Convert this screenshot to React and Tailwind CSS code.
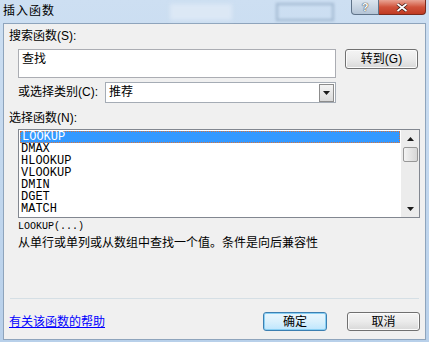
import React from 'react';

const cjk = "font-['Liberation_Sans','Noto_Sans_CJK_SC',sans-serif]";
const mono = "font-['Liberation_Mono',monospace]";

const funcs = ['LOOKUP', 'DMAX', 'HLOOKUP', 'VLOOKUP', 'DMIN', 'DGET', 'MATCH'];

const Arrow = ({ up }) => (
    <svg width="7" height="4" viewBox="0 0 7 4">
        <path d={up ? 'M0 4 L3.5 0 L7 4 Z' : 'M0 0 L7 0 L3.5 4 Z'} fill="#1a1a1a" />
    </svg>
);

const App = () => {
    return (
        <div className={`w-[429px] h-[342px] flex flex-col bg-gradient-to-b from-[#cddff2] to-[#b8d0ea] text-[12px] text-black ${cjk}`}>
            {/* title bar */}
            <div className="h-[23px] flex items-start relative">
                <div className="absolute left-[170px] top-[4px] w-[62px] h-[16px] bg-[#dce8f5] blur-[2px]" />
                <div className="absolute left-[276px] top-[3px] w-[58px] h-[18px] border-2 border-[#9fb6cf] blur-[1.5px]" />
                <div className="relative pl-[3px] pt-[4px] text-[12px] leading-[14px] tracking-[1px]">插入函数</div>
                <div className="flex-1" />
                <div className="relative mr-[3px] flex">
                    <div className="w-[28px] h-[15px] rounded-bl-[4px] border border-t-0 border-[#5f7389] bg-gradient-to-b from-[#dbe5ef] to-[#b4c4d6] flex items-center justify-center text-[11px] font-bold text-white leading-none [text-shadow:0_0_1px_#333,0_0_1px_#333]">?</div>
                    <div className="w-[47px] h-[15px] rounded-br-[4px] border border-l-0 border-t-0 border-[#7a2a1c] bg-gradient-to-b from-[#e8a495] via-[#d0533c] to-[#c03a22] flex items-center justify-center">
                        <svg width="12" height="9" viewBox="0 0 12 9">
                            <path d="M1.5 1 L10.5 8 M10.5 1 L1.5 8" stroke="#3b1a14" strokeWidth="3.2" />
                            <path d="M1.5 1 L10.5 8 M10.5 1 L1.5 8" stroke="#ffffff" strokeWidth="1.8" />
                        </svg>
                    </div>
                </div>
            </div>

            {/* client area */}
            <div className="mx-[3px] h-[317px] bg-[#f0f0f0] border border-[#8ea4bc] flex flex-col">
                <div className="ml-[5px] mt-[6px] h-[13px] leading-[13px]">搜索函数(S):</div>

                <div className="mt-[6px] flex items-start">
                    <div className="ml-[14px] w-[318px] h-[29px] border border-[#abadb3] bg-white pl-[3px] pt-[3px] leading-[13px]">查找</div>
                    <button className="ml-[9px] w-[73px] h-[20px] rounded-[3px] border border-[#707070] bg-gradient-to-b from-[#f4f4f4] via-[#ebebeb] to-[#d8d8d8] leading-[14px] shadow-[inset_0_0_0_1px_#fbfbfb]">转到(G)</button>
                </div>

                <div className="mt-[4px] flex items-center">
                    <div className="ml-[14px] w-[87px] leading-[13px]">或选择类别(C):</div>
                    <div className="w-[231px] h-[21px] border border-[#a5acb5] bg-white flex items-center">
                        <div className="flex-1 pl-[3px] leading-[13px]">推荐</div>
                        <div className="w-[15px] h-[18px] mr-[1px] border border-[#8c8c8c] bg-gradient-to-b from-[#f4f4f4] to-[#dadada] flex items-center justify-center">
                            <Arrow />
                        </div>
                    </div>
                </div>

                <div className="ml-[5px] mt-[9px] h-[13px] leading-[13px]">选择函数(N):</div>

                <div className="ml-[14px] mt-[4px] w-[402px] h-[89px] border border-[#828790] bg-white flex">
                    <div className="flex-1 pt-[1px] pl-[1px] pr-[1px]">
                        {funcs.map((f, i) => (
                            <div
                                key={f}
                                className={`h-[12px] pl-[1px] text-[12px] ${mono} ${i === 0 ? 'bg-[#3399ff] text-white border border-dotted border-[#d9733a] leading-[10px]' : 'leading-[12px]'}`}
                            >
                                {f}
                            </div>
                        ))}
                    </div>
                    <div className="w-[18px] bg-[#ececec] flex flex-col items-center">
                        <div className="h-[17px] flex items-center justify-center"><Arrow up /></div>
                        <div className="w-[15px] h-[15px] rounded-[2px] border border-[#979797] bg-gradient-to-r from-[#f3f3f3] to-[#d6d6d6]" />
                        <div className="flex-1" />
                        <div className="h-[17px] flex items-center justify-center"><Arrow /></div>
                    </div>
                </div>

                <div className={`ml-[14px] mt-[3px] text-[10px] leading-[12px] ${mono}`}>LOOKUP(...)</div>
                <div className="ml-[14px] mt-[3px] text-[12px] leading-[14px]">从单行或单列或从数组中查找一个值。条件是向后兼容性</div>

                <div className="flex-1" />
                <div className="mx-[6px] border-t border-[#d5dfe5]" />

                <div className="mt-[13px] mb-[8px] flex items-center">
                    <a href="#" className="ml-[5px] text-[#0000ff] underline leading-[14px]">有关该函数的帮助</a>
                    <div className="flex-1" />
                    <button className="w-[64px] h-[19px] rounded-[3px] border border-[#3c7fb1] bg-gradient-to-b from-[#eaf6fd] via-[#d9f0fc] to-[#bee6fd] shadow-[inset_0_0_0_1px_#88cff3] leading-[14px]">确定</button>
                    <button className="ml-[20px] mr-[5px] w-[73px] h-[19px] rounded-[3px] border border-[#707070] bg-gradient-to-b from-[#f4f4f4] via-[#ebebeb] to-[#d8d8d8] shadow-[inset_0_0_0_1px_#fbfbfb] leading-[14px]">取消</button>
                </div>
            </div>
        </div>
    );
};

export default App;
